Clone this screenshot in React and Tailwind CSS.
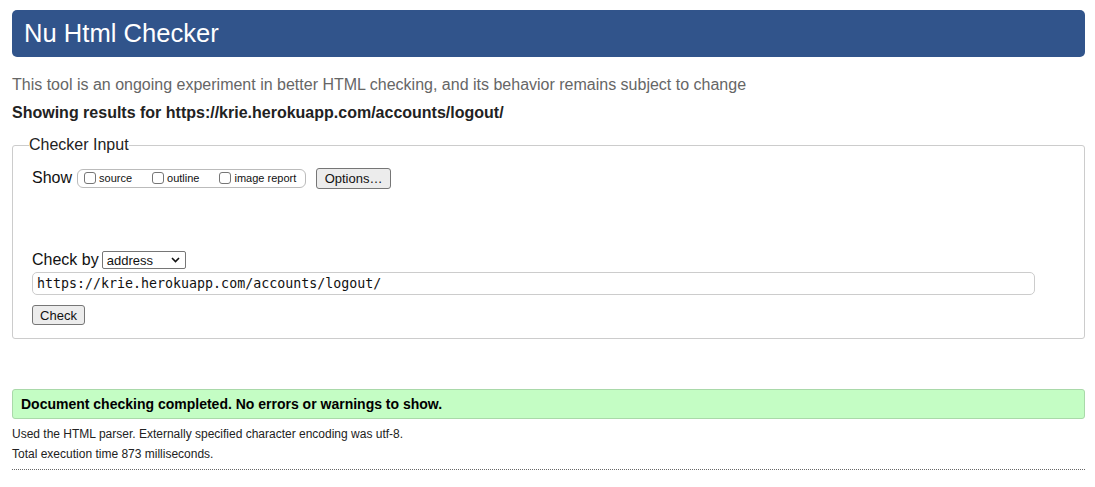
import React from "react";

const Box = ({ label }) => (
  <span className="flex items-center">
    <span className="w-[12px] h-[12px] border border-[#767676] rounded-[3px] bg-white" />
    <span className="ml-[3px] text-[11px] text-[#111]">{label}</span>
  </span>
);

const App = () => {
  return (
    <div className="min-h-screen bg-white pl-[12px] pr-[10px] pt-[10px] font-['Liberation_Sans',Arial,sans-serif] text-[#222]">
      {/* Title bar */}
      <div className="h-[47px] bg-[#31548b] rounded-[5px] flex items-center pl-[12px]">
        <h1 className="text-white text-[25.6px] leading-none">Nu Html Checker</h1>
      </div>

      <p className="mt-[18px] text-[16px] leading-[20px] text-[#666]">
        This tool is an ongoing experiment in better HTML checking, and its behavior remains subject to change
      </p>
      <p className="mt-[8px] text-[16px] leading-[20px] font-bold text-[#222]">
        Showing results for https://krie.herokuapp.com/accounts/logout/
      </p>

      {/* Checker input */}
      <fieldset className="mt-[12px] border border-[#ccc] rounded-[3px] pl-[16px] pr-[16px] pb-[11px]">
        <legend className="text-[16px] leading-[20px] text-[#222]">Checker Input</legend>
        <div className="pl-[3px]">
          <div className="mt-[12px] flex items-center h-[22px]">
            <span className="text-[16px] text-[#111]">Show</span>
            <div className="ml-[5px] h-[19px] w-[229px] border border-[#bbb] rounded-[6px] flex items-center pl-[6px]">
              <Box label="source" />
              <span className="w-[20px]" />
              <Box label="outline" />
              <span className="w-[20px]" />
              <Box label="image report" />
            </div>
            <button className="ml-[10px] h-[21px] w-[75px] bg-[#ececec] border border-[#767676] rounded-[3px] text-[13px] text-[#111]">
              Options…
            </button>
          </div>

          <div className="mt-[61px] flex items-center h-[20px]">
            <span className="text-[16px] text-[#111]">Check by</span>
            <div className="ml-[3px] h-[18px] w-[84px] border border-[#767676] rounded-[2px] bg-white flex items-center justify-between pl-[4px] pr-[5px]">
              <span className="text-[13px] text-[#111] leading-none">address</span>
              <svg width="9" height="6" viewBox="0 0 9 6" fill="none">
                <path d="M1 1l3.5 3.5L8 1" stroke="#111" strokeWidth="1.6" />
              </svg>
            </div>
          </div>

          <div className="mt-[2px] h-[23px] w-[1003px] border border-[#ccc] rounded-[5px] flex items-center pl-[4px]">
            <span className="font-['DejaVu_Sans_Mono',monospace] text-[13.3px] text-[#111]">
              https://krie.herokuapp.com/accounts/logout/
            </span>
          </div>

          <button className="mt-[10px] h-[20px] w-[53px] bg-[#ececec] border border-[#767676] rounded-[3px] text-[13px] text-[#111]">
            Check
          </button>
        </div>
      </fieldset>

      {/* Result */}
      <div className="mt-[50px] h-[30px] bg-[#c4fdc4] border border-[#a9d9a9] rounded-[3px] flex items-center pl-[8px]">
        <span className="text-[14px] font-bold text-black">
          Document checking completed. No errors or warnings to show.
        </span>
      </div>
      <p className="mt-[8px] text-[12px] leading-[14px] text-[#222]">
        Used the HTML parser. Externally specified character encoding was utf-8.
      </p>
      <p className="mt-[6px] text-[12px] leading-[14px] text-[#222]">
        Total execution time 873 milliseconds.
      </p>
      <div className="mt-[8px] border-t border-dotted border-[#666]" />
    </div>
  );
};

export default App;
